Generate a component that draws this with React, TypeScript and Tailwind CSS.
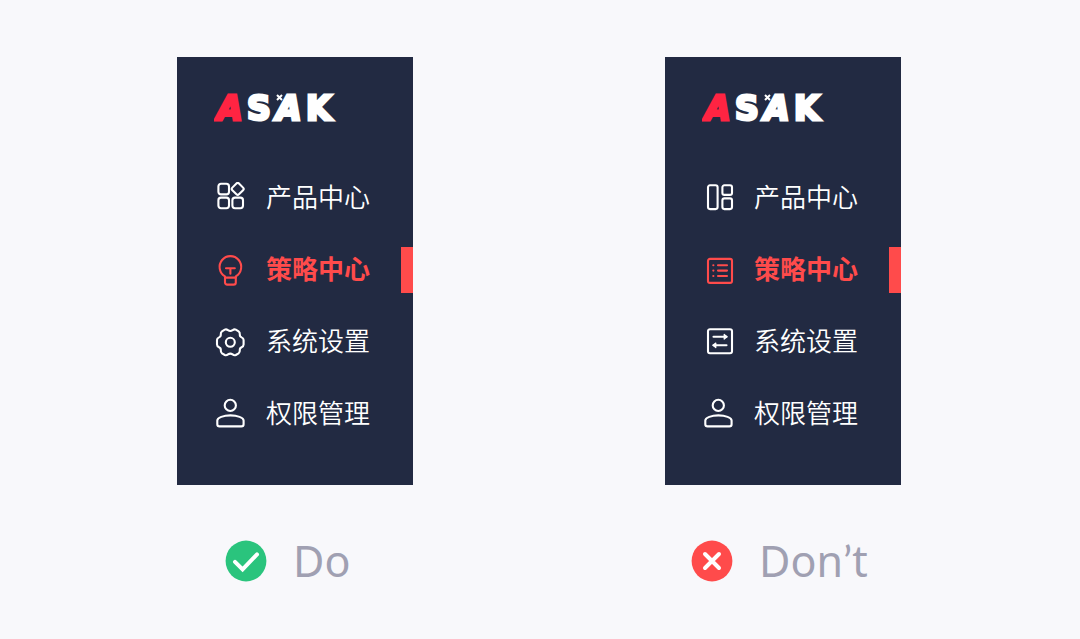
import { clsx } from 'clsx';
import type { ReactNode } from 'react';

type NavItem = {
  label: string;
  icon: ReactNode;
};

const Icon = ({ children }: { children: ReactNode }) => (
  <svg
    className="h-8 w-8 shrink-0"
    viewBox="0 0 32 32"
    fill="none"
    stroke="currentColor"
    strokeWidth={2.1}
    strokeLinecap="round"
    strokeLinejoin="round"
    aria-hidden="true"
  >
    {children}
  </svg>
);

const UserIcon = () => (
  <Icon>
    <circle cx="16.3" cy="7.4" r="5.6" />
    <path d="M3.3 22.6C3.3 19.6 9.5 17.4 16.4 17.4s13.2 2.2 13.2 5.2v3.6a2.2 2.2 0 0 1-2.2 2.2H5.5a2.2 2.2 0 0 1-2.2-2.2z" />
  </Icon>
);

const doItems: NavItem[] = [
  {
    label: '产品中心',
    icon: (
      <Icon>
        <rect x="4.4" y="1.8" width="10.6" height="10.6" rx="2.6" />
        <rect x="4.4" y="15.6" width="10.6" height="10.6" rx="2.6" />
        <rect x="18.4" y="15.6" width="10.6" height="10.6" rx="2.6" />
        <rect x="19" y="2.2" width="9.4" height="9.4" rx="1.8" transform="rotate(45 23.7 6.9)" />
      </Icon>
    ),
  },
  {
    label: '策略中心',
    icon: (
      <Icon>
        <path d="M11 23.6v-1.3A10.8 10.8 0 1 1 21.8 22.3v1.3" />
        <path d="M11 23.6h10.8v4.8a2.2 2.2 0 0 1-2.2 2.2h-6.4a2.2 2.2 0 0 1-2.2-2.2z" />
        <path d="M12 14.2h8.8M16.4 14.2v5.6" />
      </Icon>
    ),
  },
  {
    label: '系统设置',
    icon: (
      <Icon>
        <path d="M18.6 4.2Q20.2 2.9 21.8 3.6L24.6 5.3Q26 6.3 25.8 8.4Q25.6 10.5 27.6 11.4Q29.6 12.2 29.6 14V18.6Q29.6 20.4 27.6 21.2Q25.6 22.1 25.8 24.2Q26 26.3 24.6 27.3L21.8 29Q20.2 29.7 18.6 28.4Q16.3 26.8 14 28.4Q12.4 29.7 10.8 29L8 27.3Q6.6 26.3 6.8 24.2Q7 22.1 5 21.2Q3 20.4 3 18.6V14Q3 12.2 5 11.4Q7 10.5 6.8 8.4Q6.6 6.3 8 5.3L10.8 3.6Q12.4 2.9 14 4.2Q16.3 5.8 18.6 4.2z" />
        <circle cx="16.3" cy="16.3" r="4.5" />
      </Icon>
    ),
  },
  { label: '权限管理', icon: <UserIcon /> },
];

const dontItems: NavItem[] = [
  {
    label: '产品中心',
    icon: (
      <Icon>
        <rect x="6" y="3.3" width="9.6" height="23.8" rx="2" />
        <rect x="20.4" y="3.3" width="9.6" height="9.6" rx="2" />
        <rect x="20.4" y="16.4" width="9.6" height="10.7" rx="2" />
      </Icon>
    ),
  },
  {
    label: '策略中心',
    icon: (
      <Icon>
        <rect x="6" y="4.9" width="24" height="24" rx="2" />
        <path d="M16 11.2h9M16 16.6h9M16 22h9M11.3 11.2h.1M11.3 16.6h.1M11.3 22h.1" />
      </Icon>
    ),
  },
  {
    label: '系统设置',
    icon: (
      <Icon>
        <rect x="6" y="3.2" width="24" height="24" rx="2" />
        <path d="M11.5 10.7h13M11.5 19.3h13" />
        <path d="M22.2 8.4l2.8 2.3-2.8 2.3zM13.8 17l-2.8 2.3 2.8 2.3z" fill="currentColor" strokeWidth="1.2" />
      </Icon>
    ),
  },
  { label: '权限管理', icon: <UserIcon /> },
];

const Logo = () => (
  <svg
    className="h-12 w-32"
    viewBox="0 0 128 48"
    fontFamily="'DejaVu Sans', sans-serif"
    fontWeight={700}
    fontSize={33}
    fill="#ffffff"
    stroke="#ffffff"
    strokeWidth="3"
  >
    <text x="3" y="35" fontStyle="italic" fill="#ff2442" stroke="#ff2442">A</text>
    <text x="33" y="35">S</text>
    <text x="62" y="35" fontStyle="italic">A</text>
    <text x="92" y="35">K</text>
    <path d="M63 10l5 5M68 10l-5 5" strokeWidth="2" />
  </svg>
);

const Sidebar = ({ items, name }: { items: NavItem[]; name: string }) => (
  <div className="w-[236px] bg-[#222a42] pt-7 pb-12">
    <div className="pl-[37px]">
      <Logo />
    </div>
    <nav aria-label={name} className="mt-[42px] flex flex-col gap-[26px]">
      {items.map((item, index) => (
        <a
          key={item.label}
          href="#"
          aria-current={index === 1 ? 'page' : undefined}
          className={clsx(
            'flex h-[46px] items-center gap-5 pl-[37px] text-[26px] leading-8',
            index === 1 ? 'border-r-12 border-[#ff4b4b] font-bold text-[#ff4b4b]' : 'font-[350] text-white',
          )}
        >
          {item.icon}
          <span className="pb-1 whitespace-nowrap">{item.label}</span>
        </a>
      ))}
    </nav>
  </div>
);

const App = () => {
  return (
    <main
      lang="zh-CN"
      className="flex min-h-screen flex-wrap items-start justify-center gap-x-[252px] gap-y-16 bg-[#f8f8fb] pt-[57px] pr-0.5 font-['Noto_Sans_CJK_SC',sans-serif]"
    >
      <figure>
        <Sidebar items={doItems} name="Do" />
        <figcaption className="mt-11 flex items-center gap-[26px] pl-12 font-['Noto_Sans',sans-serif] text-[43px] leading-16 text-[#a0a0b2]">
          <svg className="h-[42px] w-[42px]" viewBox="0 0 42 42" fill="none" aria-hidden="true">
            <circle cx="21" cy="21" r="20.4" fill="#2ac47d" />
            <path d="M10 21.8l7.6 7.6L32 14.4" stroke="#ffffff" strokeWidth="4" strokeLinecap="round" />
          </svg>
          Do
        </figcaption>
      </figure>
      <figure>
        <Sidebar items={dontItems} name="Don’t" />
        <figcaption className="mt-11 flex items-center gap-[26px] pl-[26px] font-['Noto_Sans',sans-serif] text-[43px] leading-16 text-[#a0a0b2]">
          <svg className="h-[42px] w-[42px]" viewBox="0 0 42 42" fill="none" aria-hidden="true">
            <circle cx="21" cy="21" r="20.4" fill="#ff4b4b" />
            <path d="M14 14l14 14M28 14L14 28" stroke="#ffffff" strokeWidth="4" strokeLinecap="round" />
          </svg>
          <span>
            Don<span className="font-['Lato',sans-serif]">’</span>t
          </span>
        </figcaption>
      </figure>
    </main>
  );
};

export default App;
